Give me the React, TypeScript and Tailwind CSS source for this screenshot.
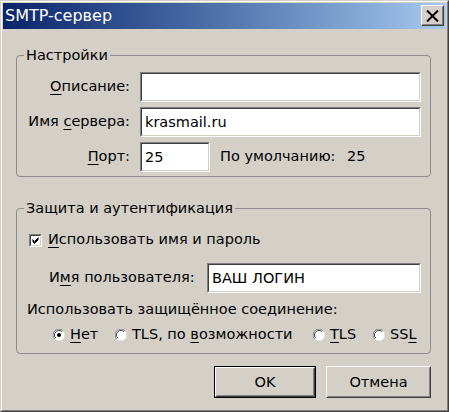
import type { ReactNode } from "react";

function Field({ value = "", className = "" }: { value?: string; className?: string }) {
  return (
    <div className={`h-[30px] border border-t-[#808080] border-l-[#808080] border-r-white border-b-white ${className}`}>
      <div className="h-full border border-t-[#404040] border-l-[#404040] border-r-[#d4d0c8] border-b-[#d4d0c8] bg-white flex items-center pl-[3px] leading-none">
        {value}
      </div>
    </div>
  );
}

function Radio({ checked = false }: { checked?: boolean }) {
  return (
    <svg width="12" height="12" viewBox="0 0 12 12" className="shrink-0">
      <circle cx="6" cy="6" r="5.5" fill="#fff" />
      <path d="M1.8 10.2 A5.5 5.5 0 0 1 10.2 1.8" fill="none" stroke="#808080" strokeWidth="1" />
      <path d="M10.2 1.8 A5.5 5.5 0 0 1 1.8 10.2" fill="none" stroke="#e6e3de" strokeWidth="1" />
      <path d="M2.8 9.2 A4.5 4.5 0 0 1 9.2 2.8" fill="none" stroke="#404040" strokeWidth="1" />
      {checked && <circle cx="6" cy="6" r="2" fill="#000" />}
    </svg>
  );
}

function Checkbox() {
  return (
    <div className="w-[13px] h-[13px] border border-t-[#808080] border-l-[#808080] border-r-white border-b-white shrink-0">
      <div className="w-full h-full border border-t-[#404040] border-l-[#404040] border-r-[#d4d0c8] border-b-[#d4d0c8] bg-white">
        <svg width="9" height="9" viewBox="0 0 9 9">
          <path d="M1.5 3.5 L3.5 5.5 L7.5 1.5 M1.5 4.5 L3.5 6.5 L7.5 2.5 M1.5 5.5 L3.5 7.5 L7.5 3.5" fill="none" stroke="#000" strokeWidth="1" />
        </svg>
      </div>
    </div>
  );
}

function Group({ title, className = "", children }: { title: string; className?: string; children: ReactNode }) {
  return (
    <fieldset className={`border border-[#8d8d8d] rounded-[4px] ${className}`}>
      <legend className="ml-[7px] px-[2px] leading-[18px]">{title}</legend>
      {children}
    </fieldset>
  );
}

function Button({ label, primary = false, width }: { label: string; primary?: boolean; width: string }) {
  return (
    <div className={`h-[32px] ${width} ${primary ? "border border-black" : ""}`}>
      <div className="h-full border border-t-white border-l-white border-r-[#404040] border-b-[#404040]">
        <div className="h-full border border-t-[#d4d0c8] border-l-[#d4d0c8] border-r-[#808080] border-b-[#808080] flex items-center justify-center leading-none">
          {label}
        </div>
      </div>
    </div>
  );
}

function Option({ checked = false, width, children }: { checked?: boolean; width: string; children: ReactNode }) {
  return (
    <label className={`flex items-center gap-[5px] ${width}`}>
      <Radio checked={checked} />
      <span>{children}</span>
    </label>
  );
}

const u = "underline underline-offset-[3px]";

export default function App() {
  return (
    <div className="w-[449px] h-[412px] bg-[#d4d0c8] border border-t-[#d4d0c8] border-l-[#d4d0c8] border-r-[#404040] border-b-[#404040] font-['DejaVu_Sans',sans-serif] text-[14.5px] text-black whitespace-nowrap">
      <div className="h-full border border-t-white border-l-white border-r-[#808080] border-b-[#808080] p-px">
        <div className="h-[26px] bg-gradient-to-r from-[#0a246a] to-[#a6caf0] flex items-center justify-between pl-[2px] pr-[2px]">
          <span className="text-white text-[16px] leading-none">SMTP-сервер</span>
          <div className="w-[23px] h-[21px] -mt-px bg-[#d4d0c8] border border-t-white border-l-white border-r-[#404040] border-b-[#404040]">
            <div className="h-full border border-t-[#d4d0c8] border-l-[#d4d0c8] border-r-[#808080] border-b-[#808080] flex items-center justify-center">
              <svg width="13" height="12" viewBox="0 0 13 12">
                <path d="M1 0.5 L12 11.5 M12 0.5 L1 11.5" stroke="#000" strokeWidth="2" />
              </svg>
            </div>
          </div>
        </div>

        <div className="ml-[13px] mr-[15px]">
          <Group title="Настройки" className="mt-[17px] pt-[8px] pb-[4px] pr-[9px]">
            <div className="flex flex-col gap-[5px]">
              <div className="flex items-center gap-[10px]">
                <span className="w-[113px] text-right">
                  <span className={u}>О</span>писание:
                </span>
                <Field className="flex-1" />
              </div>
              <div className="flex items-center gap-[10px]">
                <span className="w-[113px] text-right">
                  Имя <span className={u}>с</span>ервера:
                </span>
                <Field className="flex-1" value="krasmail.ru" />
              </div>
              <div className="flex items-center gap-[10px]">
                <span className="w-[113px] text-right">
                  <span className={u}>П</span>орт:
                </span>
                <Field className="w-[70px]" value="25" />
                <span className="w-[117px]">По умолчанию:</span>
                <span>25</span>
              </div>
            </div>
          </Group>

          <Group title="Защита и аутентификация" className="mt-[22px] pt-[14px] pb-[9px] pr-[9px]">
            <div className="flex items-center gap-[6px] h-[18px] pl-[12px]">
              <Checkbox />
              <span>
                <span className={u}>И</span>спользовать имя и пароль
              </span>
            </div>
            <div className="flex items-center gap-[10px] mt-[14px] pl-[32px]">
              <span className="w-[148px]">
                И<span className={u}>м</span>я пользователя:
              </span>
              <Field className="flex-1" value="ВАШ ЛОГИН" />
            </div>
            <div className="h-[18px] mt-[7px] pl-[10px] leading-[18px]">Использовать защищённое соединение:</div>
            <div className="h-[18px] mt-[8px] pl-[36px] flex items-center">
              <Option checked width="w-[62px]">
                <span className={u}>Н</span>ет
              </Option>
              <Option width="w-[198px]">
                TLS, по <span className={u}>в</span>озможности
              </Option>
              <Option width="w-[60px]">
                <span className={u}>T</span>LS
              </Option>
              <Option width="w-[46px]">
                SS<span className={u}>L</span>
              </Option>
            </div>
          </Group>

          <div className="mt-[12px] flex justify-end gap-[10px]">
            <Button label="OK" primary width="w-[102px]" />
            <Button label="Отмена" width="w-[105px]" />
          </div>
        </div>
      </div>
    </div>
  );
}
